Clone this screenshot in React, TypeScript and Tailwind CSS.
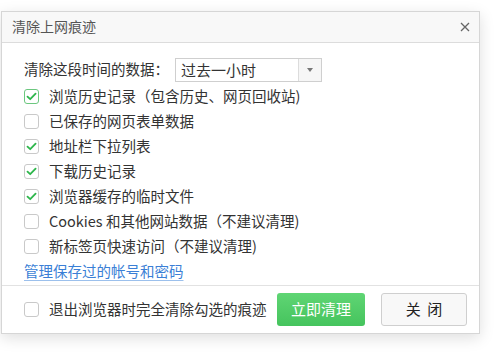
import React, { useState } from "react";

const items = [
  { label: "浏览历史记录（包含历史、网页回收站)", checked: true, focus: true },
  { label: "已保存的网页表单数据", checked: false },
  { label: "地址栏下拉列表", checked: true },
  { label: "下载历史记录", checked: true },
  { label: "浏览器缓存的临时文件", checked: true },
  { label: "Cookies 和其他网站数据（不建议清理)", checked: false },
  { label: "新标签页快速访问（不建议清理)", checked: false },
];

const CheckBox = ({
  checked,
  focus,
  onClick,
}: {
  checked: boolean;
  focus?: boolean;
  onClick?: () => void;
}) => (
  <span
    onClick={onClick}
    className={`flex h-[15px] w-[15px] shrink-0 items-center justify-center rounded-[3px] border bg-white ${
      focus ? "border-[#6cc77f]" : "border-[#c9c9c9]"
    }`}
  >
    {checked && (
      <svg width="11" height="9" viewBox="0 0 11 9">
        <path
          d="M1.5 4.6 L4.2 7.2 L9.6 1.6"
          fill="none"
          stroke="#2db64b"
          strokeWidth="1.8"
          strokeLinecap="round"
          strokeLinejoin="round"
        />
      </svg>
    )}
  </span>
);

const App = () => {
  const [checks, setChecks] = useState(items.map((i) => i.checked));
  const [quit, setQuit] = useState(false);

  return (
    <div
      className="h-[362px] w-[500px] bg-white pl-[1px] pt-[11px] text-[14.5px] text-[#333]"
      style={{ fontFamily: '"Noto Sans CJK SC", "Noto Sans", sans-serif' }}
    >
      <div className="flex h-[323px] w-[479px] flex-col border border-[#d6d6d6] bg-white shadow-[0_4px_14px_rgba(0,0,0,0.13)]">
        <div className="flex h-[31px] items-center justify-between border-b border-[#dcdcdc] bg-[#f8f8f8] pl-[10px] pr-[8px]">
          <span className="text-[14px] text-[#555]">清除上网痕迹</span>
          <svg width="10" height="10" viewBox="0 0 10 10" className="mr-[1px]">
            <path d="M1 1 L9 9 M9 1 L1 9" stroke="#666" strokeWidth="1.3" />
          </svg>
        </div>

        <div className="flex flex-1 flex-col px-[22px] pt-[15px]">
          <div className="flex h-[24px] items-center">
            <span className="w-[151px] leading-none">清除这段时间的数据：</span>
            <div className="flex h-[24px] w-[147px] items-stretch border border-[#cfcfcf]">
              <span className="flex flex-1 items-center pl-[5px] text-[15px] leading-none">
                过去一小时
              </span>
              <span className="flex w-[23px] items-center justify-center border-l border-[#dcdcdc] bg-[#f6f6f6]">
                <svg width="6" height="4" viewBox="0 0 6 4">
                  <path d="M0 0 H6 L3 4 Z" fill="#777" />
                </svg>
              </span>
            </div>
          </div>

          <div className="mt-[2px] flex flex-col">
            {items.map((it, i) => (
              <div key={i} className="flex h-[25px] items-center gap-[10px]">
                <CheckBox
                  checked={checks[i]}
                  focus={it.focus}
                  onClick={() =>
                    setChecks(checks.map((c, j) => (j === i ? !c : c)))
                  }
                />
                <span className="leading-none">{it.label}</span>
              </div>
            ))}
            <div className="flex h-[26px] items-center">
              <span className="leading-none text-[#3b7fd6] underline decoration-[#9cc0ec] underline-offset-[3px]">
                管理保存过的帐号和密码
              </span>
            </div>
          </div>
        </div>

        <div className="flex h-[49px] items-center border-t border-[#e2e2e2] pl-[22px] pr-[12px]">
          <CheckBox checked={quit} onClick={() => setQuit(!quit)} />
          <span className="ml-[10px] leading-none">退出浏览器时完全清除勾选的痕迹</span>
          <button className="ml-auto flex h-[33px] w-[88px] items-center justify-center rounded-[3px] bg-gradient-to-b from-[#5fd574] to-[#45c45d] text-[15px] text-white">
            立即清理
          </button>
          <button className="ml-[16px] flex h-[33px] w-[86px] items-center justify-center rounded-[3px] border border-[#cfcfcf] bg-[#f8f8f8] text-[15px] text-[#222]">
            关&nbsp;&nbsp;闭
          </button>
        </div>
      </div>
    </div>
  );
};

export default App;
